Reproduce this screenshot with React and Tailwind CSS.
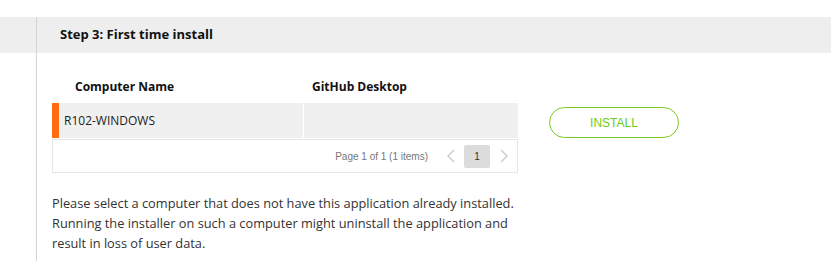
import React from "react";

export default function App() {
  const os = { fontFamily: '"Open Sans", "Noto Sans", sans-serif' };
  const hv = { fontFamily: '"Liberation Sans", Arial, sans-serif' };
  return (
    <div className="w-[831px] h-[261px] bg-white overflow-hidden pt-[17px]" style={os}>
      <div className="flex h-[36px] bg-[#eeeeee]">
        <div className="w-[36px] shrink-0" />
        <div className="flex-1 border-l border-[#d4d4d4] pl-[23px] flex items-center text-[13px] font-bold text-[#111]">
          Step 3: First time install
        </div>
      </div>
      <div className="ml-[36px] border-l border-[#d4d4d4] pl-[15px] pt-[17px] h-[300px]">
        <div className="flex items-start">
          <div className="w-[466px]">
            <div className="flex h-[33px] items-center text-[12px] font-bold text-[#111]">
              <div className="w-[252px] pl-[23px]">Computer Name</div>
              <div className="pl-[8px]">GitHub Desktop</div>
            </div>
            <div className="flex h-[35px] bg-[#f0f0f0]">
              <div className="w-[7px] bg-[#ff6a13]" />
              <div className="w-[245px] flex items-center pl-[5px] text-[12px] text-[#222] border-r border-white">
                R102-WINDOWS
              </div>
              <div className="flex-1" />
            </div>
            <div className="mt-[1px] h-[34px] border border-[#e6e6e6] flex items-center justify-end pr-[8px]" style={hv}>
              <span className="text-[10px] text-[#777] mr-[18px]">Page 1 of 1 (1 items)</span>
              <svg width="10" height="16" viewBox="0 0 10 16" className="mr-[8px]">
                <path d="M8 2 L2 8 L8 14" fill="none" stroke="#c8c8c8" strokeWidth="1.3" />
              </svg>
              <div className="w-[26px] h-[23px] bg-[#dcdcdc] rounded-[2px] flex items-center justify-center text-[10px] text-[#333]">
                1
              </div>
              <svg width="10" height="16" viewBox="0 0 10 16" className="ml-[9px]">
                <path d="M2 2 L8 8 L2 14" fill="none" stroke="#c8c8c8" strokeWidth="1.3" />
              </svg>
            </div>
          </div>
          <div className="ml-[31px] mt-[37px] w-[130px] h-[31px] rounded-full border-[1.5px] border-[#77cc22] flex items-center justify-center text-[12px] text-[#6ccb1a]" style={hv}>
            INSTALL
          </div>
        </div>
        <p className="mt-[20px] w-[475px] text-[12.8px] leading-[20px] text-[#333]">
          Please select a computer that does not have this application already installed. Running the installer on such a computer might uninstall the application and result in loss of user data.
        </p>
      </div>
    </div>
  );
}
